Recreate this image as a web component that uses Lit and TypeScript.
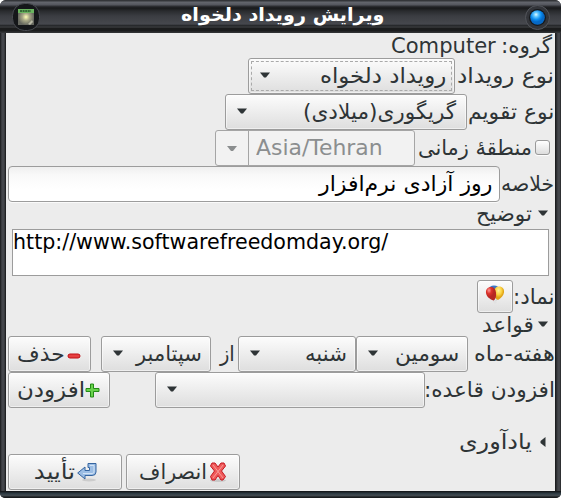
import { LitElement, html, css, svg } from "lit";
import { customElement, property, state } from "lit/decorators.js";

/** Text whose visible ink is fitted to a given width. */
@customElement("ink-text")
class InkText extends LitElement {
  @property() text = "";
  @property({ type: Number }) w = 0;
  @state() private scale = 1;
  @state() private shift = 0;
  static styles = css`
    :host { display: block; width: fit-content; flex: none; direction: ltr; text-align: left; white-space: nowrap; line-height: 24px; }
    span { display: inline-block; transform-origin: 0 50%; }
  `;
  firstUpdated() {
    const cs = getComputedStyle(this);
    const ctx = document.createElement("canvas").getContext("2d")!;
    ctx.font = `${cs.fontWeight} ${cs.fontSize} ${cs.fontFamily}`;
    ctx.textAlign = "left";
    const rtl = /[\u0600-\u06ff]/.test(this.text);
    ctx.direction = rtl ? "rtl" : "ltr";
    const m = ctx.measureText(this.text);
    const ink = m.actualBoundingBoxLeft + m.actualBoundingBoxRight;
    this.scale = this.w / ink;
    this.shift = m.actualBoundingBoxLeft * this.scale;
  }
  render() {
    const rtl = /[\u0600-\u06ff]/.test(this.text);
    return html`<div style="width:${this.w}px"><span dir=${rtl ? "rtl" : "ltr"} style="transform:translateX(${this.shift}px) scaleX(${this.scale})">${this.text}</span></div>`;
  }
}

@customElement("gtk-select")
class GtkSelect extends LitElement {
  @property() value = "";
  @property({ type: Number }) w = 0;
  @property({ type: Boolean, reflect: true }) focused = false;
  static styles = css`
    :host { display: flex; box-sizing: border-box; position: relative; height: 36px; flex: none; align-items: center; border: 1px solid #9c9c9c; border-radius: 3px; background: linear-gradient(#fcfcfc, #dedede); padding: 0 9px 0 9px; justify-content: space-between; white-space: nowrap; box-shadow: inset 0 0 0 1px rgba(255,255,255,.5); }
    :host([focused]) { outline: 1px dashed #aaa; outline-offset: -4px; padding-right: 8px; }
    svg { width: 10px; height: 6px; flex: none; margin-left: 2px; margin-bottom: 2px; }
  `;
  render() {
    return html`${this.value ? html`<ink-text .text=${this.value} .w=${this.w}></ink-text>` : html`<span></span>`}<svg viewBox="0 0 10 6"><path d="M0 .5H10L6 5.500H4Z" fill="#2e3436"/></svg>`;
  }
}

const balloons = svg`<defs>
  <radialGradient id="r" cx=".3" cy=".25"><stop offset="0" stop-color="#f99"/><stop offset=".5" stop-color="#dc332b"/><stop offset="1" stop-color="#b62723"/></radialGradient>
  <radialGradient id="y" cx=".45" cy=".3"><stop offset="0" stop-color="#fff3a0"/><stop offset=".6" stop-color="#fbd342"/><stop offset="1" stop-color="#e0a418"/></radialGradient></defs>
  <ellipse cx="9" cy="4.500" rx="5.500" ry="4" fill="#3b76c4"/>
  <path d="M8 14 9.500 17M12 14l-2 3" stroke="#ccc" fill="none"/><circle cx="10" cy="17" r="1.600" fill="#e2e2e2"/>
  <path d="M14 1.500c3.500 0 5.500 2.500 5 6-.4 3-3 6-6 7.500-2.500-1-4-4-4-7s1-6.500 5-6.500Z" fill="url(#y)"/>
  <path d="M6 2C2.500 2 .6 4.500 1 8c.4 3.500 4 6.500 7.500 7.500 2-1 3-4 2.500-8C10.500 4 9 2 6 2Z" fill="url(#r)"/>`;

@customElement("app-root")
class AppRoot extends LitElement {
  static styles = css`
    :host { display: block; width: 561px; height: 498px; background: #fff; font: 21.33px/24px "DejaVu Sans", sans-serif; color: #2e3436; overflow: hidden; }
    .window { box-sizing: border-box; height: 498px; display: flex; flex-direction: column; border-radius: 6px 6px 5px 5px; overflow: hidden; background: linear-gradient(90deg, #17181a 0, #44464b 2px, #44464b 4px, #141516 6px, #141516 555px, #44464b 558px, #44464b 560px, #17181a 561px); }
    .title { display: flex; align-items: center; height: 33px; flex: none; box-sizing: border-box; padding: 0 9px 0 12px; justify-content: space-between; background: linear-gradient(#333539 0, #333539 1px, #64676e 2px, #53555d 5px, #303236 6px, #18191b 8px, #292b2e 11px, #3b3d42 16px, #46484e 24px, #1d1f21 26px, #45474a 27px, #1b1c1d 28px, #1b1c1d 31px, #303234 32px); }
    .title h1 { font-size: 18.500px; line-height: 24px; margin: 0 0 3px; color: #fff; }
    .orb { width: 28px; height: 28px; flex: none; }
    .left { margin: 1px 0 0 0; }
    .foot { height: 7px; flex: none; background: linear-gradient(#15191c 0, #15191c 1px, #2d3a42 2px, #2d3a42 3px, #444d53 4px, #3a4146 5px, #181b1d 6px); }
    .body { flex: 1; background: #ececec; margin: 0 6px; padding: 0 2px; direction: rtl; display: flex; flex-direction: column; }
    .row { display: flex; height: 36px; flex: none; align-items: center; white-space: nowrap; }
    .lab { flex: none; }
    .group { height: 25px; gap: 7px; }
    .w98 { width: 98px; } .w86 { width: 86px; } .w53 { width: 53px; } .w85 { width: 85px; } .w128 { width: 128px; } .w40 { width: 40px; }
    .type { width: 207px; } .calendar { width: 242px; } .nth { width: 112px; } .day { width: 118px; } .month { width: 110px; } .rule { width: 270px; }
    .of { width: 22px; padding-right: 5px; flex: none; }
    .check { box-sizing: border-box; width: 15px; height: 15px; margin: 0 3px 1px 5px; border: 1px solid #999; border-radius: 3px; background: linear-gradient(#fff, #ddd); box-shadow: 0 1px 1px #fff; flex: none; }
    .zone { display: flex; direction: ltr; box-sizing: border-box; width: 200px; height: 36px; border: 1px solid #a5a5a5; border-radius: 3px; background: #f2f2f2; color: #8b8e8f; align-items: center; }
    .zone .drop { width: 33px; height: 34px; box-sizing: border-box; border-right: 1px solid #a5a5a5; display: grid; place-items: center; }
    .zone .drop svg { width: 10px; height: 5px; }
    .zone .name { padding-left: 7px; }
    .zw { width: 115px; }
    .entry { box-sizing: border-box; width: 492px; height: 36px; border: 1px solid #9c9c9c; border-radius: 4px; background: linear-gradient(#efefef, #f9f9f9 8px, #fff 22px); padding: 5px 7px; color: #000; box-shadow: 0 1px #fafafa; }
    .expander { height: 24px; flex: none; display: flex; align-items: center; gap: 6px; padding-right: 5px; }
    .expander svg { width: 10px; height: 6px; flex: none; margin-bottom: 2px; }
    .rules { height: 23px; }
    .area { box-sizing: border-box; margin: 3px 4px 0; height: 47px; flex: none; border: 1px solid #9c9c9c; background: #fff; color: #000; direction: ltr; padding: 0 0 0 1px; }
    .iconrow { height: 33px; margin-top: 4px; }
    .btn { box-sizing: border-box; height: 36px; border: 1px solid #9c9c9c; border-radius: 3px; background: linear-gradient(#fcfcfc, #dedede); display: flex; align-items: center; flex: none; box-shadow: inset 0 0 0 1px rgba(255,255,255,.5); }
    .btn svg { flex: none; }
    .pick { width: 36px; height: 33px; justify-content: center; }
    .pick svg { margin-bottom: 3px; }
    .push { margin-right: auto; }
    .delete { width: 83px; padding-right: 9px; gap: 4px; }
    .delete svg { margin-top: 3px; }
    .add { width: 102px; padding-right: 9px; gap: 2px; }
    .reminder { margin-top: 22px; }
    .expander.reminder svg { width: 6px; height: 10px; margin: 0 2px; }
    .actions { direction: ltr; display: flex; gap: 4px; }
    .action { width: 114px; direction: rtl; }
    .ok { padding-right: 24px; gap: 2px; }
    .cancel { padding-right: 12px; gap: 4px; }
  `;
  t(text: string, w: number) {
    return html`<ink-text .text=${text} .w=${w}></ink-text>`;
  }
  expander(label: string, w: number, open = true) {
    return html`${open ? html`<svg viewBox="0 0 10 6"><path d="M0 .5H10L6 5.500H4Z" fill="#2e3436"/></svg>` : html`<svg viewBox="0 0 6 10"><path d="M5.500 0V10L.5 6V4Z" fill="#2e3436"/></svg>`}${this.t(label, w)}`;
  }
  render() {
    return html`<div class="window">
      <header class="title">
        <svg class="orb left" viewBox="0 0 28 28"><defs><radialGradient id="g"><stop offset="0" stop-color="#ffffb8"/><stop offset=".45" stop-color="#a9a987"/><stop offset="1" stop-color="#65675f"/></radialGradient></defs><rect x=".5" y=".5" width="27" height="27" rx="12" fill="#15171a" stroke="#484b51"/><path d="M6 6H22V22H6Z" fill="url(#g)"/><path d="M6 6H22V10H6Z" fill="#69b45e"/><path d="M8 8H19" stroke="#26532b" stroke-width="1.500" stroke-dasharray="2 .6"/><path d="m16 21 4-4 1 2-3 3Z" fill="#b9b9a6"/></svg>
        <h1>${this.t("ویرایش رویداد دلخواه", 203)}</h1>
        <svg class="orb" viewBox="0 0 28 28"><defs><radialGradient id="b" cx=".4" cy=".3"><stop offset="0" stop-color="#e4faff"/><stop offset=".3" stop-color="#65c9ff"/><stop offset=".7" stop-color="#0a8cf0"/><stop offset="1" stop-color="#0668c5"/></radialGradient></defs><circle cx="13.500" cy="14.500" r="12" fill="#33353a" stroke="#53565c"/><circle cx="13.500" cy="14.500" r="8.500" fill="#16181b"/><circle cx="13.500" cy="14.500" r="7.300" fill="url(#b)"/></svg>
      </header>
      <main class="body">
        <div class="row group">${this.t("گروه:", 50)}${this.t("Computer", 104)}</div>
        <div class="row"><span class="lab w98">${this.t("نوع رویداد", 95)}</span><gtk-select class="type" focused value="رویداد دلخواه" .w=${125}></gtk-select></div>
        <div class="row"><span class="lab w86">${this.t("نوع تقویم", 84.5)}</span><gtk-select class="calendar" value="گریگوری(میلادی)" .w=${153}></gtk-select></div>
        <div class="row"><span class="check"></span><span class="lab zw">${this.t("منطقهٔ زمانی", 111.5)}</span><div class="zone"><span class="drop"><svg viewBox="0 0 10 5"><path d="M0 0H10L6 5H4Z" fill="#8b8e8f"/></svg></span><span class="name">${this.t("Asia/Tehran", 125)}</span></div></div>
        <div class="row"><span class="lab w53">${this.t("خلاصه", 51)}</span><div class="entry">${this.t("روز آزادی نرم‌افزار", 174)}</div></div>
        <div class="expander">${this.expander("توضیح", 55)}</div>
        <div class="area">${this.t("http://www.softwarefreedomday.org/", 375)}</div>
        <div class="row iconrow"><span class="lab w40">${this.t("نماد:", 38.5)}</span><div class="btn pick"><svg width="20" height="20" viewBox="0 0 20 20">${balloons}</svg></div></div>
        <div class="expander rules">${this.expander("قواعد", 49.5)}</div>
        <div class="row"><span class="lab w85">${this.t("هفته-ماه", 78.5)}</span><gtk-select class="nth" value="سومین" .w=${62.5}></gtk-select><gtk-select class="day" value="شنبه" .w=${40}></gtk-select><span class="of">${this.t("از", 14)}</span><gtk-select class="month" value="سپتامبر" .w=${66}></gtk-select>
          <div class="btn delete push"><svg width="14" height="6" viewBox="0 0 14 6"><rect x="1" y="1" width="12" height="4" rx="2" fill="#e64040" stroke="#bf0e15"/></svg>${this.t("حذف", 45.5)}</div></div>
        <div class="row"><span class="lab w128">${this.t("افزودن قاعده:", 127)}</span><gtk-select class="rule"></gtk-select>
          <div class="btn add push"><svg width="15" height="15" viewBox="0 0 15 15"><path d="M5.500 1h3v4.500H14v3H8.500V14h-3V8.500H1v-3h4.500Z" fill="#69d34c" stroke="#238b16" stroke-linejoin="round"/></svg>${this.t("افزودن", 65)}</div></div>
        <div class="expander reminder">${this.expander("یادآوری", 72, false)}</div>
        <div class="actions">
          <div class="btn action ok"><svg width="20" height="20" viewBox="0 0 20 20"><ellipse cx="12" cy="18" rx="7" ry="1.500" fill="#bbb" opacity=".6"/><path d="M.7 11 8 5v3.500h4.500V5.500H11V1.500h8V10q0 3.500-4 3.500H8V17Z" fill="#9bbde4" stroke="#3565a0" stroke-linejoin="round"/><path d="M13 3.500h4V10q0 1.500-2 1.500H6" stroke="#d1e2f5" fill="none"/></svg>${this.t("تأیید", 40)}</div>
          <div class="btn action cancel"><svg width="18" height="20" viewBox="0 0 18 20"><ellipse cx="9" cy="18.500" rx="8" ry="1.500" fill="#bbb" opacity=".7"/><path d="M3 1h3l3 4 3-4h3l1.500 3-4 5 4 5.500L14 18h-2l-3-4.500L6 18H3l-1.500-3.500 4-5.500-4-5Z" fill="#ef5a5a" stroke="#c41720" stroke-linejoin="round"/><path d="m4 3 10 13M14 3 4 16" stroke="#fa9a98"/></svg>${this.t("انصراف", 65)}</div>
        </div>
      </main><div class="foot"></div></div>`;
  }
}
